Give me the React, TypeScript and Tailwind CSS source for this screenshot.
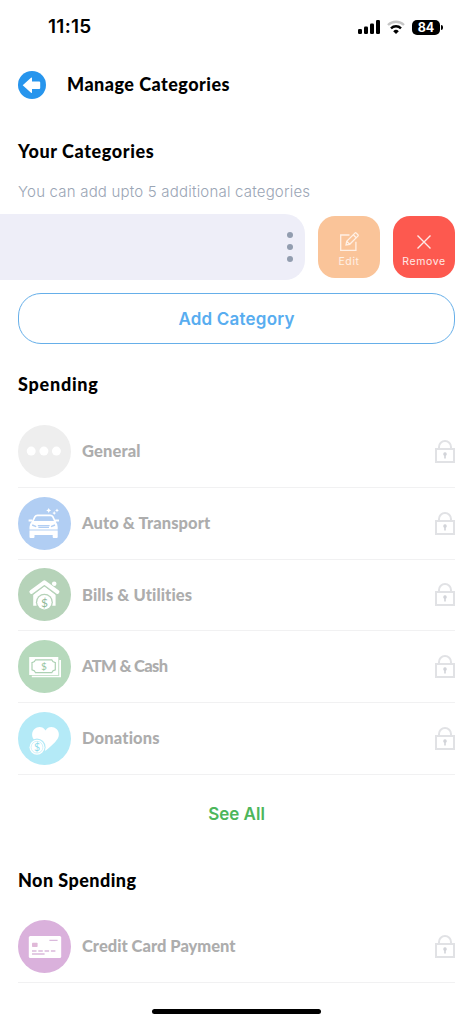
import React from "react";

const heading = "font-['Lato'] font-black text-black whitespace-nowrap";

const GeneralIcon = () => (
  <svg viewBox="0 0 53 53" className="w-[53px] h-[53px] shrink-0">
    <circle cx="26.5" cy="26.5" r="26.5" fill="#eeeeee" />
    <g fill="#fff">
      <circle cx="13.2" cy="26.1" r="4.5" />
      <circle cx="25.9" cy="26.1" r="4.5" />
      <circle cx="38.4" cy="26.1" r="4.5" />
    </g>
  </svg>
);

const CarIcon = () => (
  <svg viewBox="0 0 53 53" className="w-[53px] h-[53px] shrink-0">
    <circle cx="26.5" cy="26.5" r="26.5" fill="#b1cef3" />
    <path d="M14.2 25.5 17 19.6q.7-1.3 2.5-1.3h12.8q1.8 0 2.5 1.3l2.8 5.9" fill="none" stroke="#fff" strokeWidth="1.7" />
    <g fill="#fff">
      <path d="M10.6 22.4h3.6l.8 2h-4.4zM37.2 22.4h3.8v2h-4.6z" />
      <path d="M14.3 24h22.8q2.6 2.8 2.6 6v2.5H11.5V30q0-3.2 2.8-6z" />
      <path d="M11.5 33.6h28.2V38H11.5zM11.5 38h5v2q0 1-1 1h-3q-1 0-1-1zM34.7 38h5v2q0 1-1 1h-3q-1 0-1-1z" />
      <path d="m30.7 10.9.8 1.7 1.7.8-1.7.8-.8 1.7-.8-1.7-1.7-.8 1.7-.8zM39 11.4l.6 1.4 1.3.6-1.3.6-.6 1.4-.6-1.4-1.3-.6 1.3-.6zM36.2 14.1l.6 1.4 1.3.6-1.3.6-.6 1.4-.6-1.4-1.3-.6 1.3-.6z" />
    </g>
    <g fill="none" stroke="#b1cef3">
      <path d="m14.2 28 4 1.7m18.8-1.7-4 1.7" strokeWidth="1.4" />
      <path d="M19.8 28.6h11.8M20.4 30.4h10.6" strokeWidth="1.3" />
    </g>
  </svg>
);

const HouseIcon = () => (
  <svg viewBox="0 0 53 53" className="w-[53px] h-[53px] shrink-0">
    <circle cx="26.5" cy="26.5" r="26.5" fill="#b6d3b9" />
    <circle cx="36.2" cy="15.7" r="2.3" fill="#fff" />
    <path d="M15.2 26.6 26.4 18.2l11.2 8.4v11.2H15.2z" fill="#fff" />
    <path d="m13.2 24.8 13.2-10.2 13.2 10.2" fill="none" stroke="#b6d3b9" strokeWidth="5.8" strokeLinejoin="round" />
    <path d="m13.4 23.9 13-9.6 13 9.6" fill="none" stroke="#fff" strokeWidth="4" strokeLinecap="round" strokeLinejoin="round" />
    <circle cx="26.4" cy="34.2" r="8.5" fill="#b6d3b9" />
    <circle cx="26.4" cy="34.2" r="7.2" fill="#fff" />
    <text x="26.4" y="38.6" textAnchor="middle" className="font-['Lato'] text-[12px]" fill="#91b998">$</text>
  </svg>
);

const CashIcon = () => (
  <svg viewBox="0 0 53 53" className="w-[53px] h-[53px] shrink-0">
    <circle cx="26.5" cy="26.5" r="26.5" fill="#b6d9bc" />
    <path d="M11.2 17.1h29.1V35H11.2zM41.2 20h1.8v17.3H13.8v-1.5h27.4z" fill="#fff" />
    <path d="M17.5 19.8h16.3q.7 2.4 3.5 2.8v7.2q-2.8.4-3.5 2.8H17.5q-.7-2.4-3.5-2.8v-7.2q2.8-.4 3.5-2.8z" fill="none" stroke="#acd1b3" strokeWidth="1.2" />
    <text x="25.8" y="29.7" textAnchor="middle" className="font-['Lato'] text-[10px]" fill="#94c39c">$</text>
  </svg>
);

const DonationIcon = () => (
  <svg viewBox="0 0 53 53" className="w-[53px] h-[53px] shrink-0">
    <circle cx="26.5" cy="26.5" r="26.5" fill="#b4eaf7" />
    <path d="M27.5 18.4c2.4-4.4 8-4.4 11-1.5 2.8 2.7 3.2 7 .8 10.3-2.6 3.7-7.3 8.1-11.8 11.5-4.5-3.4-9.2-7.8-11.8-11.5-2.4-3.3-2-7.6.8-10.3 3-2.9 8.6-2.9 11 1.5z" fill="#fff" />
    <circle cx="19" cy="35.2" r="8.6" fill="#b4eaf7" />
    <circle cx="19" cy="35.2" r="7.5" fill="#fff" />
    <circle cx="19" cy="35.2" r="5.9" fill="none" stroke="#c6eff8" strokeWidth=".8" />
    <text x="19" y="39" textAnchor="middle" className="font-['Lato'] text-[10.5px]" fill="#8fdded">$</text>
  </svg>
);

const CardIcon = () => (
  <svg viewBox="0 0 53 53" className="w-[53px] h-[53px] shrink-0">
    <circle cx="26.5" cy="26.5" r="26.5" fill="#dab1dc" />
    <rect x="10.8" y="16" width="32.4" height="22" rx="1.5" fill="#fff" />
    <rect x="14" y="22.7" width="5.6" height="4.2" rx=".7" fill="#e0b9d8" />
    <path d="M31.4 20.4h8.2M14 31h4.5m1.8 0h4.5m1.8 0h4.5m1.8 0h4.5M14 34h12.6" stroke="#dab9dc" strokeWidth="1.3" />
  </svg>
);

const LockIcon = () => (
  <svg viewBox="0 0 20 23" className="w-5 h-[23px] ml-auto shrink-0" fill="none">
    <path d="M4 8.5V7a6 6 0 0 1 12 0v1.5" stroke="#e1e2e5" strokeWidth="2" />
    <rect x="1" y="9" width="18" height="13" stroke="#e1e2e5" strokeWidth="2" />
    <path d="M10 12.3a1.8 1.8 0 0 1 .8 3.4v2.7H9.2v-2.7a1.8 1.8 0 0 1 .8-3.4z" fill="#d2d4d9" />
  </svg>
);

interface Category {
  name: string;
  icon: React.ReactNode;
  spacing: string;
}

const spending: Category[] = [
  { name: "General", icon: <GeneralIcon />, spacing: "tracking-[0.15px]" },
  { name: "Auto & Transport", icon: <CarIcon />, spacing: "tracking-[0.1px]" },
  { name: "Bills & Utilities", icon: <HouseIcon />, spacing: "tracking-[0.1px]" },
  { name: "ATM & Cash", icon: <CashIcon />, spacing: "tracking-[-0.65px]" },
  { name: "Donations", icon: <DonationIcon />, spacing: "tracking-[0.15px]" },
];

const CategoryRow = ({ name, icon, spacing }: Category) => (
  <div className="flex items-center h-[71.8px] border-b border-[#f1f1f2]">
    {icon}
    <span className={`ml-[11px] font-['Lato'] font-black text-[16.5px] text-[#adadad] whitespace-nowrap ${spacing}`}>
      {name}
    </span>
    <LockIcon />
  </div>
);

const StatusBar = () => (
  <div className="flex items-center h-[54px] pl-12 pr-[30px]">
    <span className="font-['Inter'] font-semibold text-[19px] tracking-[0.3px]">11:15</span>
    <svg viewBox="0 0 22 14" className="ml-auto w-[22px] h-[14px]" fill="#000">
      <rect x="0" y="9" width="4" height="5" rx="1.2" />
      <rect x="6" y="6.5" width="4" height="7.5" rx="1.2" />
      <rect x="12" y="3.5" width="4" height="10.5" rx="1.2" />
      <rect x="18" y="0" width="4" height="14" rx="1.2" />
    </svg>
    <svg viewBox="0 0 18 14" className="ml-[7px] w-[18px] h-[14px]" fill="none">
      <path d="M1 5a11.5 11.5 0 0 1 16 0" stroke="#c5c5c5" strokeWidth="2.4" />
      <path d="M4 8.3a7.2 7.2 0 0 1 10 0" stroke="#000" strokeWidth="2.4" />
      <path d="M9 14 6.2 11.2a4 4 0 0 1 5.6 0z" fill="#000" />
    </svg>
    <div className="ml-[7px] w-7 h-[15px] rounded-[5px] bg-black text-white font-['Inter'] font-bold text-[12.5px] leading-[15px] text-center">
      84
    </div>
    <div className="ml-px w-[2px] h-[5px] rounded-r-full bg-black" />
  </div>
);

const App = () => {
  return (
    <main className="w-[473px] h-[1024px] bg-white overflow-hidden flex flex-col">
      <StatusBar />

      <header className="flex items-center h-[62px] px-[18px]">
        <svg viewBox="0 0 28 28" className="w-7 h-7">
          <circle cx="14" cy="14" r="14" fill="#2795ed" />
          <path d="M4.7 14.2 13 6.7q1-.8 1 .5v3.3h7.2q1 0 1 1v5.4q0 1-1 1H14v3.3q0 1.3-1 .5z" fill="#fff" />
        </svg>
        <h1 className={`${heading} ml-[21px] pb-[2px] text-[18px] tracking-[0.47px]`}>Manage Categories</h1>
      </header>

      <section className="h-[98px] px-[18px] pt-[22px]">
        <h2 className={`${heading} text-[18px] leading-[26px] tracking-[0.6px]`}>Your Categories</h2>
        <p className="mt-[16px] font-['Inter'] font-light text-[15px] leading-6 tracking-[0.2px] text-[#9aa5b5] whitespace-nowrap">
          You can add upto 5 additional categories
        </p>
      </section>

      <div className="flex items-center h-[66px]">
        <div className="flex flex-col items-end justify-center gap-[6px] w-[305px] h-[66px] pr-3 rounded-r-[20px] bg-[#eeeef8]">
          <span className="w-[6px] h-[6px] rounded-full bg-[#929daf]" />
          <span className="w-[6px] h-[6px] rounded-full bg-[#929daf]" />
          <span className="w-[6px] h-[6px] rounded-full bg-[#929daf]" />
        </div>
        <button className="ml-[13px] w-[62px] h-[62px] pt-4 rounded-[17px] bg-[#fac499] text-[#fff0e5] flex flex-col items-center">
          <svg viewBox="0 0 20 20" className="w-5 h-5" fill="none" stroke="currentColor" strokeWidth="1.3">
            <path d="M10.5 3H1.7v15.3h15.2V9.8" />
            <path d="m7 13 .7-3.7 8.2-8.2q.7-.7 1.4 0l1.6 1.6q.7.7 0 1.4l-8.2 8.2zM14.3 2.8l2.9 2.9M7.7 9.3l3 3" />
          </svg>
          <span className="mt-[2px] font-['Inter'] text-[10.5px] leading-4 tracking-[0.6px]">Edit</span>
        </button>
        <button className="ml-[13px] w-[62px] h-[62px] pt-4 rounded-[17px] bg-[#fd594f] text-[#ffe9e7] flex flex-col items-center">
          <svg viewBox="0 0 20 20" className="w-5 h-5" fill="none" stroke="currentColor" strokeWidth="1.4">
            <path d="m3.5 3.5 13 13m0-13-13 13" />
          </svg>
          <span className="mt-[2px] font-['Inter'] text-[10.5px] leading-4 tracking-[0.6px]">Remove</span>
        </button>
      </div>

      <button className="mx-[18px] mt-[13px] h-[51px] shrink-0 rounded-[23px] border border-[#66afe9] pt-[2px] text-[#58adf0] font-['Inter'] font-semibold text-[17px] tracking-[0.2px]">
        Add Category
      </button>

      <section className="px-[18px] pt-[27px]">
        <h2 className={`${heading} text-[18px] leading-[26px] tracking-[0.75px]`}>Spending</h2>
        <div className="mt-[19px]">
          {spending.map((item) => (
            <CategoryRow key={item.name} {...item} />
          ))}
        </div>
      </section>

      <button className="h-[78px] shrink-0 pt-[2px] font-['Inter'] font-semibold text-[17px] text-[#4db65b]">See All</button>

      <section className="px-[18px] pt-[14px]">
        <h2 className={`${heading} text-[18px] leading-[26px] tracking-[0.45px]`}>Non Spending</h2>
        <div className="mt-[18px]">
          <CategoryRow name="Credit Card Payment" icon={<CardIcon />} spacing="tracking-[0px]" />
        </div>
      </section>

      <div className="mx-auto mt-[26px] w-[169px] h-[5px] shrink-0 rounded-full bg-black" />
    </main>
  );
};

export default App;
